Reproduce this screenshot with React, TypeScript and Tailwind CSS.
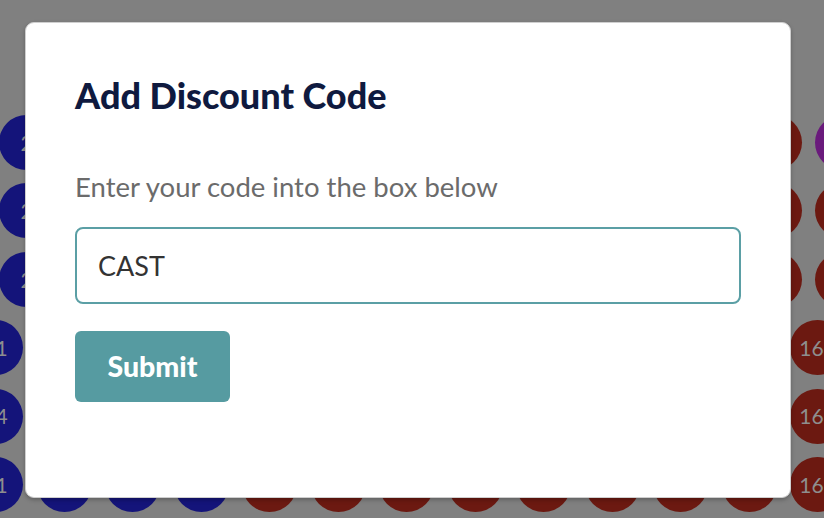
import React from 'react';

type Seat = { color: string; label?: string };

const BLUE = 'bg-[#14147a]';
const RED = 'bg-[#6c1911]';
const PURPLE = 'bg-[#6a1a7c]';

function upperRow(last: string): Seat[] {
  return Array.from({ length: 13 }, (_, i) => ({
    color: i === 0 ? BLUE : i === 12 ? last : RED,
    label: i === 0 ? '2' : undefined,
  }));
}

function lowerRow(left: string, right: string): Seat[] {
  return Array.from({ length: 13 }, (_, i) => ({
    color: i < 4 ? BLUE : RED,
    label: i === 0 ? left : i === 12 ? right : undefined,
  }));
}

const upperRows = [upperRow(PURPLE), upperRow(RED), upperRow(RED)];
const lowerRows = [lowerRow('11', '161'), lowerRow('14', '162'), lowerRow('11', '163')];

function SeatDot({ seat }: { seat: Seat }) {
  return (
    <div
      className={`flex h-[55px] w-[55px] shrink-0 items-center justify-center rounded-full text-[21px] text-[#8e8e8e] ${seat.color}`}
    >
      {seat.label}
    </div>
  );
}

export default function App() {
  return (
    <div className="relative h-[518px] w-[824px] overflow-hidden bg-[#808080] font-['Lato',sans-serif]">
      {/* seat map behind the overlay */}
      <div className="absolute inset-0 flex flex-col gap-[13.4px] pt-[115px]">
        {upperRows.map((row, r) => (
          <div key={`u${r}`} className="ml-[-1px] flex gap-[13px]">
            {row.map((s, i) => (
              <SeatDot key={i} seat={s} />
            ))}
          </div>
        ))}
        {lowerRows.map((row, r) => (
          <div key={`l${r}`} className="ml-[-32px] flex gap-[13.5px]">
            {row.map((s, i) => (
              <SeatDot key={i} seat={s} />
            ))}
          </div>
        ))}
      </div>

      {/* dialog */}
      <div className="absolute left-[25px] top-[22px] h-[476px] w-[766px] rounded-[9px] border border-[#cfcfcf] bg-white px-[49px] pt-[52px] shadow-[0_2px_4px_rgba(0,0,0,0.25)]">
        <h2 className="text-[36px] font-black leading-[40px] text-[#0f1a3f]">Add Discount Code</h2>
        <p className="mt-[56px] text-[27.5px] leading-[32px] text-[#6b6b6b]">Enter your code into the box below</p>
        <input
          defaultValue="CAST"
          className="mt-[24px] block h-[77px] w-full rounded-[8px] border-2 border-[#5b9fa5] bg-white pl-[21px] text-[27px] text-[#333333] outline-none"
        />
        <button className="mt-[27px] flex h-[71px] w-[155px] items-center justify-center rounded-[6px] bg-[#569ba1] text-[28.5px] font-black text-white">
          Submit
        </button>
      </div>
    </div>
  );
}
